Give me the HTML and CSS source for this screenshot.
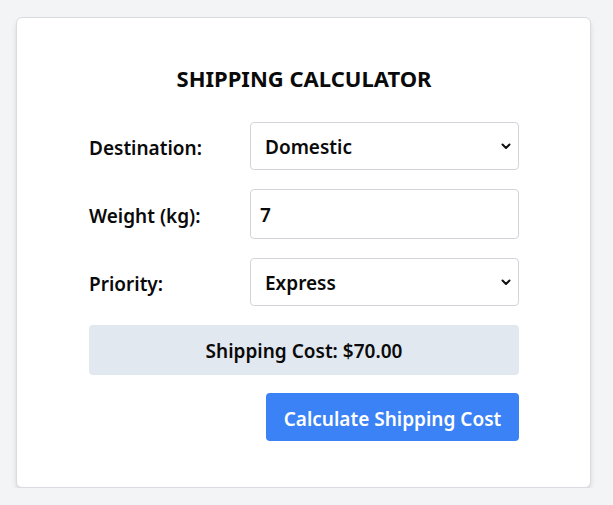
FILE: index.html
```html
<!DOCTYPE html>
<html lang="en">
<head>
<meta charset="utf-8">
<title>Shipping Calculator</title>
<link rel="stylesheet" href="styles.css">
</head>
<body>
<div class="card">
  <h2 class="title">SHIPPING CALCULATOR</h2>
  <form class="form">
    <div class="row">
      <label class="label" for="dest">Destination:</label>
      <div class="select-wrap">
        <select id="dest" class="control select">
          <option>Domestic</option>
          <option>International</option>
        </select>
        <svg class="chev" width="10" height="7" viewBox="0 0 10 7"><path d="M1.5 1.5 L5 5 L8.5 1.5" fill="none" stroke="#111" stroke-width="2" stroke-linecap="round" stroke-linejoin="round"/></svg>
      </div>
    </div>
    <div class="row">
      <label class="label" for="weight">Weight (kg):</label>
      <input id="weight" class="control input" type="text" value="7">
    </div>
    <div class="row">
      <label class="label" for="prio">Priority:</label>
      <div class="select-wrap">
        <select id="prio" class="control select">
          <option>Express</option>
          <option>Standard</option>
        </select>
        <svg class="chev" width="10" height="7" viewBox="0 0 10 7"><path d="M1.5 1.5 L5 5 L8.5 1.5" fill="none" stroke="#111" stroke-width="2" stroke-linecap="round" stroke-linejoin="round"/></svg>
      </div>
    </div>
    <div class="result">Shipping Cost: $70.00</div>
    <div class="actions">
      <button type="button" class="btn">Calculate Shipping Cost</button>
    </div>
  </form>
</div>
</body>
</html>
```
FILE: styles.css
```css
* { box-sizing: border-box; }
html, body { margin: 0; padding: 0; }
body {
  background: #f3f4f6;
  font-family: "Noto Sans", "Open Sans", sans-serif;
  color: #0a0a0a;
  padding: 17px 22px 0 16px;
}
.card {
  background: #fff;
  border: 1px solid #d9dbe0;
  border-radius: 6px;
  box-shadow: 0 4px 6px -1px rgba(0,0,0,0.12), 0 2px 4px -2px rgba(0,0,0,0.1);
  padding: 32px 71px 45px 72px;
  height: 471px;
}
.title {
  margin: 14px 0 30px;
  font-size: 22px;
  line-height: 28px;
  font-weight: 700;
  text-align: center;
}
.form { display: flex; flex-direction: column; }
.row {
  display: grid;
  grid-template-columns: 161px 1fr;
  align-items: center;
  margin-bottom: 19px;
}
.label {
  font-size: 19px;
  font-weight: 600;
  padding-top: 3px;
}
.select-wrap { position: relative; }
.control {
  width: 100%;
  font-family: inherit;
  font-size: 19px;
  font-weight: 600;
  color: #0a0a0a;
  background: #fff;
  border: 1px solid #d1d5db;
  border-radius: 4px;
  padding: 2px 14px 0;
  outline: none;
}
.select {
  height: 48px;
  appearance: none;
  -webkit-appearance: none;
}
.input { height: 50px; padding: 2px 9px 0; }
.chev {
  position: absolute;
  right: 8px;
  top: 21px;
  pointer-events: none;
}
.result {
  height: 50px;
  background: #e2e8f0;
  border-radius: 4px;
  display: flex;
  align-items: center;
  justify-content: center;
  font-size: 19px;
  font-weight: 600;
  padding-top: 2px;
  margin-bottom: 18px;
}
.actions { display: flex; justify-content: flex-end; }
.btn {
  height: 48px;
  width: 253px;
  background: #3b82f6;
  color: #fff;
  border: none;
  border-radius: 4px;
  font-family: inherit;
  font-size: 19px;
  font-weight: 600;
  padding: 3px 0 0;
}
```
